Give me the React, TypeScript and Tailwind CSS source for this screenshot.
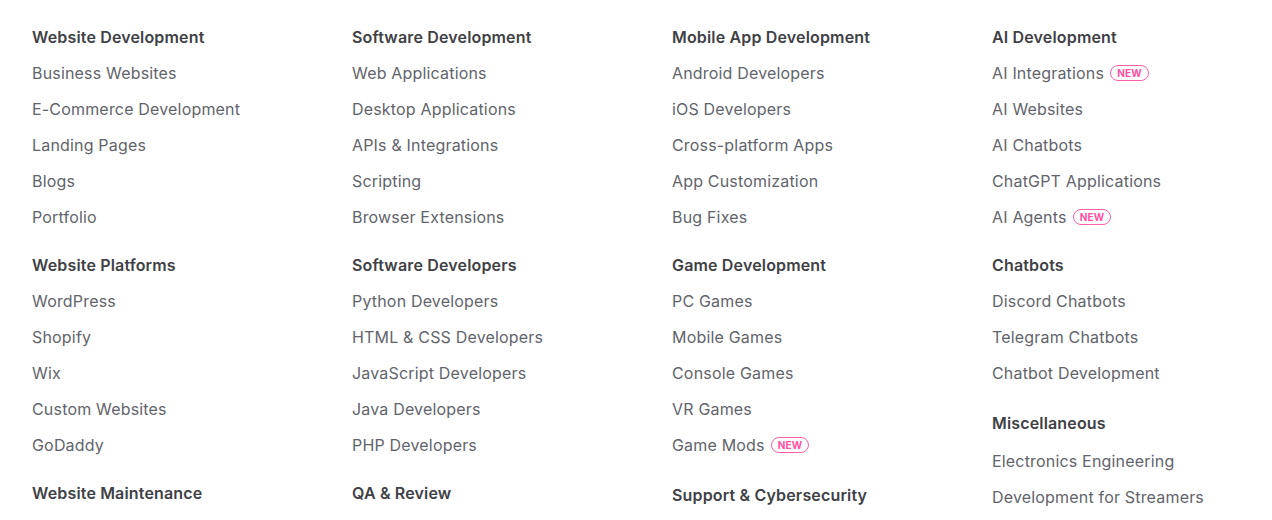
import React from "react";

type Item = { label: string; isNew?: boolean };
type Section = { title: string; items: Item[]; mt?: string; firstMt?: string };

const columns: Section[][] = [
  [
    {
      title: "Website Development",
      items: [
        { label: "Business Websites" },
        { label: "E-Commerce Development" },
        { label: "Landing Pages" },
        { label: "Blogs" },
        { label: "Portfolio" },
      ],
    },
    {
      title: "Website Platforms",
      items: [
        { label: "WordPress" },
        { label: "Shopify" },
        { label: "Wix" },
        { label: "Custom Websites" },
        { label: "GoDaddy" },
      ],
    },
    { title: "Website Maintenance", items: [] },
  ],
  [
    {
      title: "Software Development",
      items: [
        { label: "Web Applications" },
        { label: "Desktop Applications" },
        { label: "APIs & Integrations" },
        { label: "Scripting" },
        { label: "Browser Extensions" },
      ],
    },
    {
      title: "Software Developers",
      items: [
        { label: "Python Developers" },
        { label: "HTML & CSS Developers" },
        { label: "JavaScript Developers" },
        { label: "Java Developers" },
        { label: "PHP Developers" },
      ],
    },
    { title: "QA & Review", items: [] },
  ],
  [
    {
      title: "Mobile App Development",
      items: [
        { label: "Android Developers" },
        { label: "iOS Developers" },
        { label: "Cross-platform Apps" },
        { label: "App Customization" },
        { label: "Bug Fixes" },
      ],
    },
    {
      title: "Game Development",
      items: [
        { label: "PC Games" },
        { label: "Mobile Games" },
        { label: "Console Games" },
        { label: "VR Games" },
        { label: "Game Mods", isNew: true },
      ],
    },
    { title: "Support & Cybersecurity", items: [], mt: "mt-[14px]" },
  ],
  [
    {
      title: "AI Development",
      items: [
        { label: "AI Integrations", isNew: true },
        { label: "AI Websites" },
        { label: "AI Chatbots" },
        { label: "ChatGPT Applications" },
        { label: "AI Agents", isNew: true },
      ],
    },
    {
      title: "Chatbots",
      items: [
        { label: "Discord Chatbots" },
        { label: "Telegram Chatbots" },
        { label: "Chatbot Development" },
      ],
    },
    {
      title: "Miscellaneous",
      items: [
        { label: "Electronics Engineering" },
        { label: "Development for Streamers" },
      ],
      mt: "mt-[14px]",
      firstMt: "mt-[2px]",
    },
  ],
];

function NewBadge() {
  return (
    <span className="ml-[6px] inline-flex h-[16px] items-center rounded-full border border-[#ff5fa8] px-[6px] text-[10px] font-bold leading-none tracking-[0.2px] text-[#ff4fa0]">
      NEW
    </span>
  );
}

export default function App() {
  return (
    <div
      className="h-[520px] w-[1272px] overflow-hidden bg-white pl-[32px] pt-[19px]"
      style={{ fontFamily: "Inter, 'Noto Sans', Arial, sans-serif" }}
    >
      <div className="grid grid-cols-[320px_320px_320px_280px]">
        {columns.map((col, ci) => (
          <div key={ci} className="flex flex-col">
            {col.map((sec, si) => (
              <div
                key={si}
                className={`flex flex-col ${si > 0 ? sec.mt ?? "mt-[12px]" : ""}`}
              >
                <div className="flex h-[36px] items-center text-[16px] font-semibold tracking-[0.16px] text-[#404145]">
                  {sec.title}
                </div>
                {sec.items.map((it, ii) => (
                  <div
                    key={ii}
                    className={`flex h-[36px] items-center text-[16px] tracking-[0.18px] text-[#62646a] ${
                      ii === 0 && sec.firstMt ? sec.firstMt : ""
                    }`}
                  >
                    <span>{it.label}</span>
                    {it.isNew && <NewBadge />}
                  </div>
                ))}
              </div>
            ))}
          </div>
        ))}
      </div>
    </div>
  );
}
